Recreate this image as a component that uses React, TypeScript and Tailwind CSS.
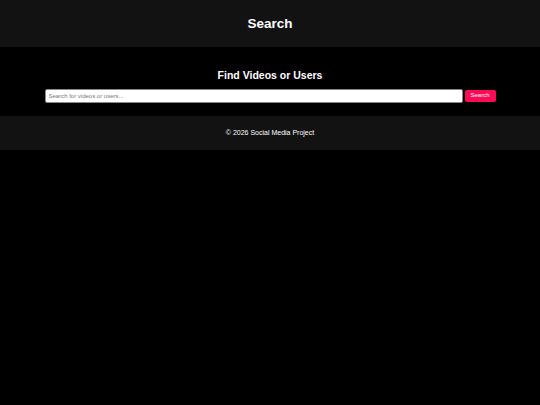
export default function App() {
  return (
    <div className="min-h-[405px] bg-black text-white font-['Liberation_Sans',Arial,sans-serif]">
      <header className="bg-[#121212] h-[47px] pt-[1px] flex items-center justify-center">
        <h1 className="text-[13.5px] font-bold">Search</h1>
      </header>

      <main className="h-[69px] pt-[21px] flex flex-col items-center">
        <h2 className="text-[10.5px] font-bold leading-[14px]">Find Videos or Users</h2>
        <form
          className="mt-[7px] flex items-center gap-[2px] w-[451px]"
          onSubmit={(e) => e.preventDefault()}
        >
          <input
            type="text"
            placeholder="Search for videos or users..."
            className="flex-1 h-[13.5px] bg-white text-black rounded-[2px] border border-[#888] px-[3px] text-[6px] placeholder:text-[#777] outline-none"
          />
          <button
            type="submit"
            className="w-[31px] h-[12.5px] bg-[#ff0a54] text-white rounded-[2px] text-[6px]"
          >
            Search
          </button>
        </form>
      </main>

      <footer className="bg-[#121212] h-[34px] pt-[1px] flex items-center justify-center">
        <p className="text-[7px]">© 2026 Social Media Project</p>
      </footer>
    </div>
  );
}
